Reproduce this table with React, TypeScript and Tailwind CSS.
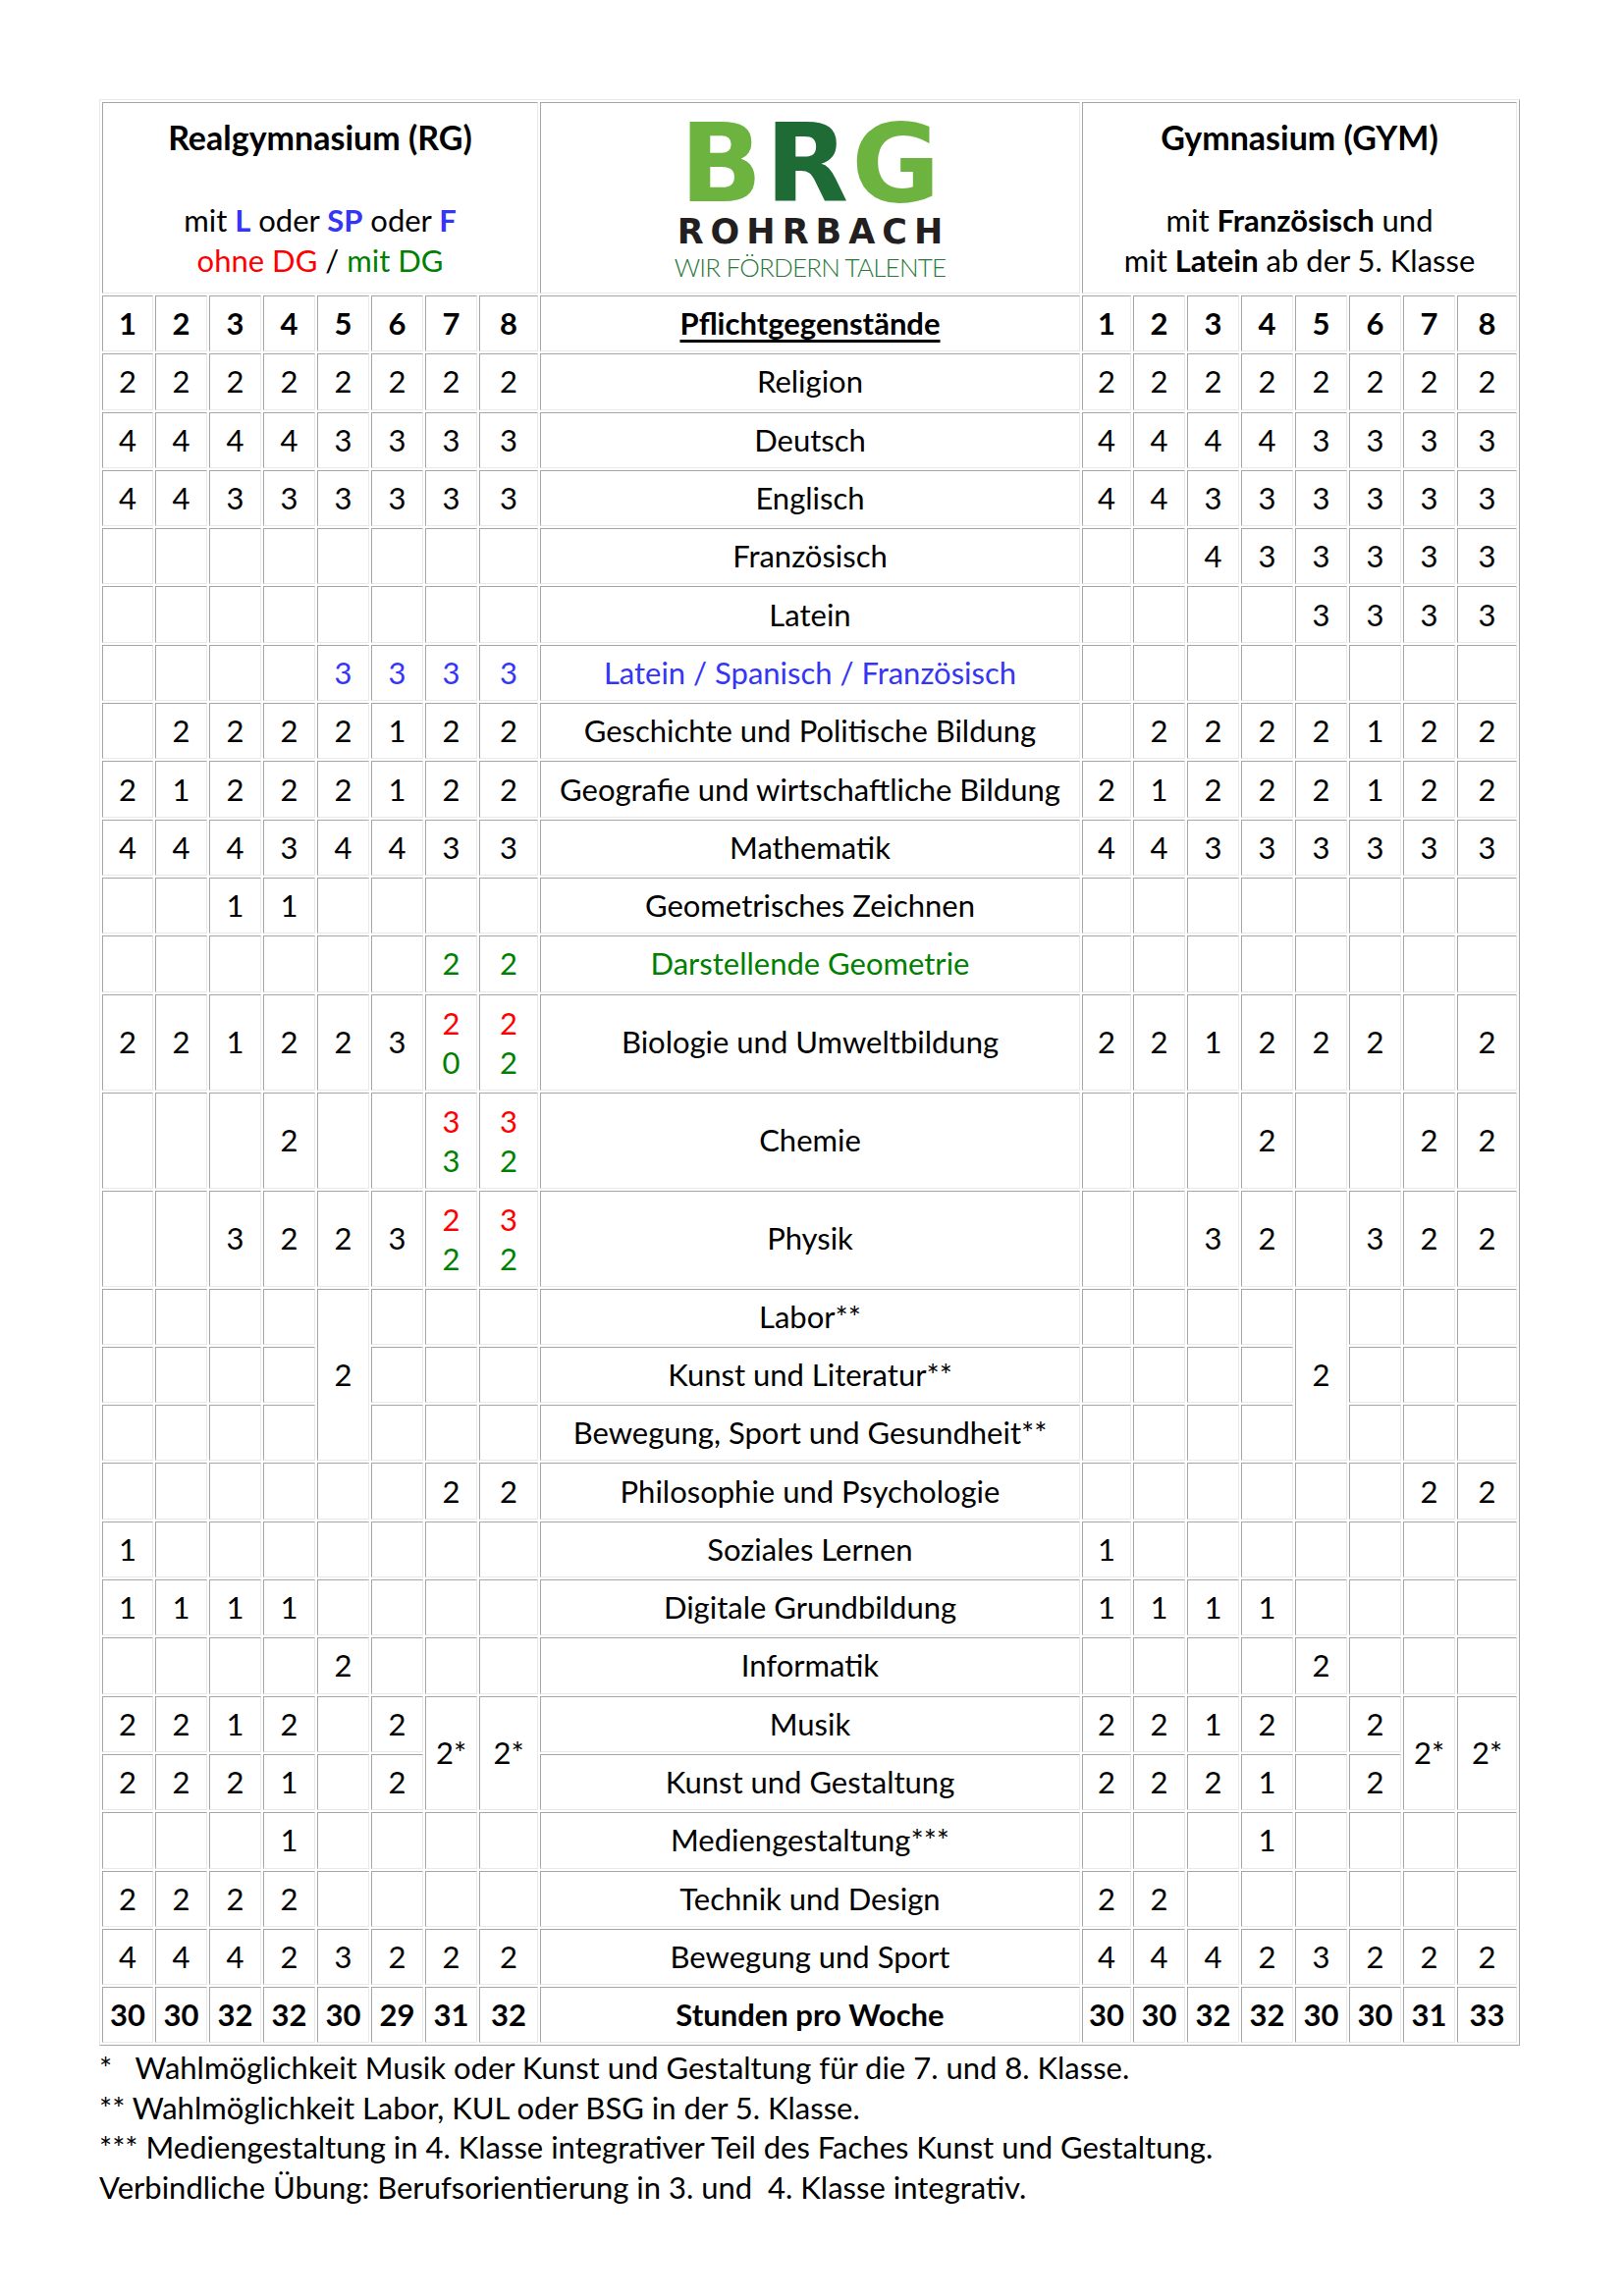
import React from "react";

type Split = { top: string; bot: string };
type Span = { v: string; rs: number };
type Cell = string | Split | Span | "x";

type Row = {
  name: string;
  rg: Cell[];
  gym: Cell[];
  tone?: "blue" | "green";
  tall?: boolean;
  bold?: boolean;
};

const e8 = ["", "", "", "", "", "", "", ""];

const rows: Row[] = [
  { name: "Religion", rg: ["2", "2", "2", "2", "2", "2", "2", "2"], gym: ["2", "2", "2", "2", "2", "2", "2", "2"] },
  { name: "Deutsch", rg: ["4", "4", "4", "4", "3", "3", "3", "3"], gym: ["4", "4", "4", "4", "3", "3", "3", "3"] },
  { name: "Englisch", rg: ["4", "4", "3", "3", "3", "3", "3", "3"], gym: ["4", "4", "3", "3", "3", "3", "3", "3"] },
  { name: "Französisch", rg: e8, gym: ["", "", "4", "3", "3", "3", "3", "3"] },
  { name: "Latein", rg: e8, gym: ["", "", "", "", "3", "3", "3", "3"] },
  { name: "Latein / Spanisch / Französisch", rg: ["", "", "", "", "3", "3", "3", "3"], gym: e8, tone: "blue" },
  { name: "Geschichte und Politische Bildung", rg: ["", "2", "2", "2", "2", "1", "2", "2"], gym: ["", "2", "2", "2", "2", "1", "2", "2"] },
  { name: "Geografie und wirtschaftliche Bildung", rg: ["2", "1", "2", "2", "2", "1", "2", "2"], gym: ["2", "1", "2", "2", "2", "1", "2", "2"] },
  { name: "Mathematik", rg: ["4", "4", "4", "3", "4", "4", "3", "3"], gym: ["4", "4", "3", "3", "3", "3", "3", "3"] },
  { name: "Geometrisches Zeichnen", rg: ["", "", "1", "1", "", "", "", ""], gym: e8 },
  { name: "Darstellende Geometrie", rg: ["", "", "", "", "", "", "2", "2"], gym: e8, tone: "green" },
  {
    name: "Biologie und Umweltbildung",
    tall: true,
    rg: ["2", "2", "1", "2", "2", "3", { top: "2", bot: "0" }, { top: "2", bot: "2" }],
    gym: ["2", "2", "1", "2", "2", "2", "", "2"],
  },
  {
    name: "Chemie",
    tall: true,
    rg: ["", "", "", "2", "", "", { top: "3", bot: "3" }, { top: "3", bot: "2" }],
    gym: ["", "", "", "2", "", "", "2", "2"],
  },
  {
    name: "Physik",
    tall: true,
    rg: ["", "", "3", "2", "2", "3", { top: "2", bot: "2" }, { top: "3", bot: "2" }],
    gym: ["", "", "3", "2", "", "3", "2", "2"],
  },
  { name: "Labor**", rg: ["", "", "", "", { v: "2", rs: 3 }, "", "", ""], gym: ["", "", "", "", { v: "2", rs: 3 }, "", "", ""] },
  { name: "Kunst und Literatur**", rg: ["", "", "", "", "x", "", "", ""], gym: ["", "", "", "", "x", "", "", ""] },
  { name: "Bewegung, Sport und Gesundheit**", rg: ["", "", "", "", "x", "", "", ""], gym: ["", "", "", "", "x", "", "", ""] },
  { name: "Philosophie und Psychologie", rg: ["", "", "", "", "", "", "2", "2"], gym: ["", "", "", "", "", "", "2", "2"] },
  { name: "Soziales Lernen", rg: ["1", "", "", "", "", "", "", ""], gym: ["1", "", "", "", "", "", "", ""] },
  { name: "Digitale Grundbildung", rg: ["1", "1", "1", "1", "", "", "", ""], gym: ["1", "1", "1", "1", "", "", "", ""] },
  { name: "Informatik", rg: ["", "", "", "", "2", "", "", ""], gym: ["", "", "", "", "2", "", "", ""] },
  {
    name: "Musik",
    rg: ["2", "2", "1", "2", "", "2", { v: "2*", rs: 2 }, { v: "2*", rs: 2 }],
    gym: ["2", "2", "1", "2", "", "2", { v: "2*", rs: 2 }, { v: "2*", rs: 2 }],
  },
  { name: "Kunst und Gestaltung", rg: ["2", "2", "2", "1", "", "2", "x", "x"], gym: ["2", "2", "2", "1", "", "2", "x", "x"] },
  { name: "Mediengestaltung***", rg: ["", "", "", "1", "", "", "", ""], gym: ["", "", "", "1", "", "", "", ""] },
  { name: "Technik und Design", rg: ["2", "2", "2", "2", "", "", "", ""], gym: ["2", "2", "", "", "", "", "", ""] },
  { name: "Bewegung und Sport", rg: ["4", "4", "4", "2", "3", "2", "2", "2"], gym: ["4", "4", "4", "2", "3", "2", "2", "2"] },
  {
    name: "Stunden pro Woche",
    bold: true,
    rg: ["30", "30", "32", "32", "30", "29", "31", "32"],
    gym: ["30", "30", "32", "32", "30", "30", "31", "33"],
  },
];

const cellBase =
  "border border-t-[#a6a6a6] border-l-[#a6a6a6] border-b-[#e9e9e9] border-r-[#e9e9e9] p-0 text-center align-middle";

function toneClass(tone?: "blue" | "green") {
  if (tone === "blue") return "text-[#3535f5]";
  if (tone === "green") return "text-[#008000]";
  return "";
}

function renderCell(c: Cell, key: string, tone?: "blue" | "green") {
  if (c === "x") return null;
  if (typeof c === "string") {
    return (
      <td key={key} className={`${cellBase} ${toneClass(tone)}`}>
        {c}
      </td>
    );
  }
  if ("rs" in c) {
    return (
      <td key={key} rowSpan={c.rs} className={cellBase}>
        {c.v}
      </td>
    );
  }
  return (
    <td key={key} className={cellBase}>
      <div className="flex flex-col leading-[40px]">
        <span className="text-[#ff0000]">{c.top}</span>
        <span className="text-[#008000]">{c.bot}</span>
      </div>
    </td>
  );
}

const nums = ["1", "2", "3", "4", "5", "6", "7", "8"];

export default function App() {
  return (
    <div
      className="min-h-[2339px] w-[1654px] bg-white pl-[101px] pt-[101px] text-black"
      style={{ fontFamily: "Lato, 'Open Sans', sans-serif" }}
    >
      <table className="table-fixed border-separate border-spacing-[2px] border border-t-[#e9e9e9] border-l-[#e9e9e9] border-b-[#a6a6a6] border-r-[#a6a6a6] text-[31px] leading-none">
        <colgroup>
          <col className="w-[52px]" />
          <col className="w-[53px]" />
          <col className="w-[53px]" />
          <col className="w-[53px]" />
          <col className="w-[53px]" />
          <col className="w-[53px]" />
          <col className="w-[53px]" />
          <col className="w-[60px]" />
          <col className="w-[550px]" />
          <col className="w-[50px]" />
          <col className="w-[53px]" />
          <col className="w-[53px]" />
          <col className="w-[53px]" />
          <col className="w-[53px]" />
          <col className="w-[53px]" />
          <col className="w-[53px]" />
          <col className="w-[61px]" />
        </colgroup>
        <tbody>
          <tr className="h-[195px]">
            <td colSpan={8} className={`${cellBase} !align-top`}>
              <div className="flex flex-col items-center pt-[14px] leading-[41px]">
                <div className="text-[34px] font-bold">Realgymnasium (RG)</div>
                <div className="h-[44px]" />
                <div>
                  mit <b className="text-[#3535f5]">L</b> oder <b className="text-[#3535f5]">SP</b> oder{" "}
                  <b className="text-[#3535f5]">F</b>
                </div>
                <div>
                  <span className="text-[#ff0000]">ohne DG</span> / <span className="text-[#008000]">mit DG</span>
                </div>
              </div>
            </td>
            <td className={`${cellBase} !align-top`}>
              <div className="flex flex-col items-center pt-[17px]">
                <div
                  className="flex h-[90px] items-center gap-[3px] text-[110px] font-bold leading-[110px]"
                  style={{ fontFamily: "'DejaVu Sans', sans-serif" }}
                >
                  <span className="text-[#6db33f]">B</span>
                  <span className="text-[#1f6b36]">R</span>
                  <span className="text-[#6db33f]">G</span>
                </div>
                <div
                  className="mt-[6px] pl-[7px] text-[35px] font-bold leading-[36px] tracking-[7px] text-[#231f20]"
                  style={{ fontFamily: "'DejaVu Sans', sans-serif" }}
                >
                  ROHRBACH
                </div>
                <div className="mt-[5px] text-[26px] font-light leading-[26px] tracking-[-0.8px] text-[#2a783b]">
                  WIR FÖRDERN TALENTE
                </div>
              </div>
            </td>
            <td colSpan={8} className={`${cellBase} !align-top`}>
              <div className="flex flex-col items-center pt-[14px] leading-[41px]">
                <div className="text-[34px] font-bold">Gymnasium (GYM)</div>
                <div className="h-[44px]" />
                <div>
                  mit <b>Französisch</b> und
                </div>
                <div>
                  mit <b>Latein</b> ab der 5. Klasse
                </div>
              </div>
            </td>
          </tr>
          <tr className="h-[57.3px] font-bold">
            {nums.map((n) => (
              <td key={"l" + n} className={cellBase}>
                {n}
              </td>
            ))}
            <td className={`${cellBase} underline underline-offset-[5px]`}>Pflichtgegenstände</td>
            {nums.map((n) => (
              <td key={"r" + n} className={cellBase}>
                {n}
              </td>
            ))}
          </tr>
          {rows.map((r, i) => (
            <tr key={i} className={`${r.tall ? "h-[98px]" : "h-[57.3px]"} ${r.bold ? "font-bold" : ""}`}>
              {r.rg.map((c, j) => renderCell(c, "l" + j, r.tone))}
              <td className={`${cellBase} ${toneClass(r.tone)}`}>{r.name}</td>
              {r.gym.map((c, j) => renderCell(c, "r" + j))}
            </tr>
          ))}
        </tbody>
      </table>
      <div className="mt-[2px] text-[31px] leading-[40.5px]">
        <p className="whitespace-pre">*   Wahlmöglichkeit Musik oder Kunst und Gestaltung für die 7. und 8. Klasse.</p>
        <p>** Wahlmöglichkeit Labor, KUL oder BSG in der 5. Klasse.</p>
        <p>*** Mediengestaltung in 4. Klasse integrativer Teil des Faches Kunst und Gestaltung.</p>
        <p className="whitespace-pre">Verbindliche Übung: Berufsorientierung in 3. und  4. Klasse integrativ.</p>
      </div>
    </div>
  );
}
